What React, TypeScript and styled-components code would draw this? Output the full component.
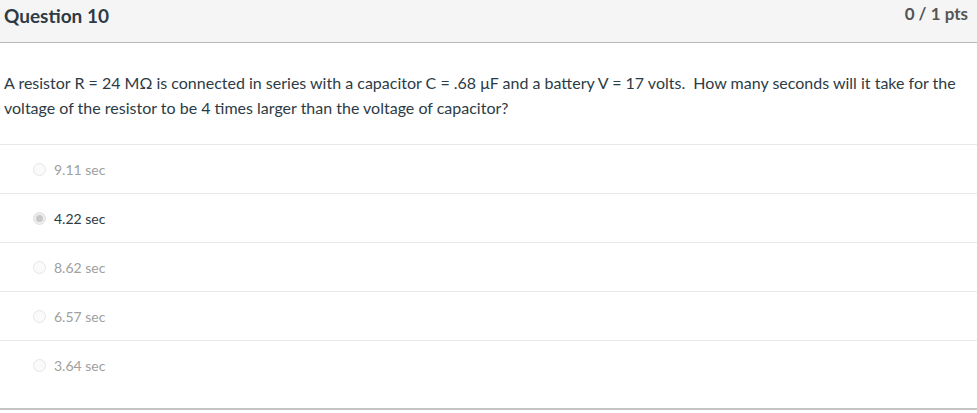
import React from "react";
import styled, { createGlobalStyle } from "styled-components";

const GlobalStyle = createGlobalStyle`
  body {
    margin: 0;
    background: #ffffff;
    font-family: Lato, "Open Sans", sans-serif;
    color: #2d3b45;
  }
`;

const Card = styled.div`
  width: 977px;
  height: 410px;
  border-bottom: 2px solid #c4c4c4;
  box-sizing: border-box;
`;

const Header = styled.div`
  display: flex;
  justify-content: space-between;
  align-items: flex-start;
  height: 43px;
  box-sizing: border-box;
  background: #f5f5f5;
  border-bottom: 1px solid #b9b9b9;
  padding: 4px 9px 0 4px;
`;

const Title = styled.h2`
  margin: 0;
  font-size: 19px;
  font-weight: 700;
  line-height: 24px;
  color: #2d3b45;
`;

const Points = styled.div`
  font-size: 17px;
  font-weight: 700;
  line-height: 20px;
  color: #555;
`;

const QuestionText = styled.p`
  margin: 0;
  padding: 27px 10px 24px 4px;
  font-size: 16px;
  line-height: 25px;
  color: #2d3b45;
`;

const Answers = styled.div`
  display: flex;
  flex-direction: column;
`;

const Answer = styled.div<{ $selected?: boolean }>`
  display: flex;
  align-items: center;
  height: 49px;
  box-sizing: border-box;
  border-top: 1px solid #e8e8e8;
  padding-left: 33px;
  font-size: 14px;
  color: ${(p) => (p.$selected ? "#2d3b45" : "#a0a0a0")};
`;

const Radio = styled.span<{ $selected?: boolean }>`
  width: 11px;
  height: 11px;
  border-radius: 50%;
  border: 1px solid #e6e6e6;
  background: ${(p) => (p.$selected ? "#c8c8c8" : "#fafafa")};
  box-shadow: ${(p) => (p.$selected ? "inset 0 0 0 2px #eeeeee" : "none")};
  margin-right: 8px;
  flex-shrink: 0;
`;

const answers = [
  { label: "9.11 sec", selected: false },
  { label: "4.22 sec", selected: true },
  { label: "8.62 sec", selected: false },
  { label: "6.57 sec", selected: false },
  { label: "3.64 sec", selected: false },
];

const App: React.FC = () => {
  return (
    <>
      <GlobalStyle />
      <Card>
        <Header>
          <Title>Question 10</Title>
          <Points>0 / 1 pts</Points>
        </Header>
        <QuestionText>
          A resistor R = 24 MΩ is connected in series with a capacitor C = .68 μF and a battery V = 17 volts.&nbsp; How many seconds will it take for the voltage of the resistor to be 4 times larger than the voltage of capacitor?
        </QuestionText>
        <Answers>
          {answers.map((a) => (
            <Answer key={a.label} $selected={a.selected}>
              <Radio $selected={a.selected} />
              {a.label}
            </Answer>
          ))}
        </Answers>
      </Card>
    </>
  );
};

export default App;
